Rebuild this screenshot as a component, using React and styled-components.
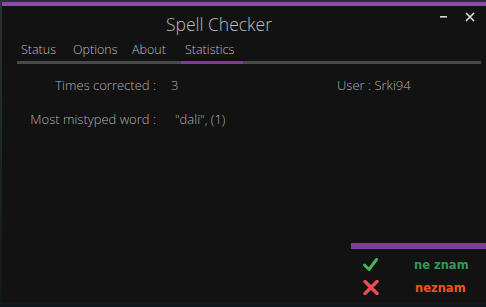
import styled, { createGlobalStyle } from "styled-components";

const GlobalStyle = createGlobalStyle`
  html, body {
    margin: 0;
    padding: 0;
    background: #0b1013;
  }
  * {
    box-sizing: border-box;
  }
`;

const Desktop = styled.div`
  position: relative;
  width: 486px;
  height: 307px;
  padding: 2px 0 4px 2px;
  background: linear-gradient(180deg, #2a3034 0%, #1d2a2e 40%, #10181b 100%);
  display: flex;
  overflow: hidden;
`;

const Window = styled.div`
  flex: 1;
  display: flex;
  flex-direction: column;
  background: #121212;
  border-top: 4px solid #8a4aa8;
  font-family: "Open Sans", "Noto Sans", sans-serif;
  color: #b0b0b0;
`;

const TitleBar = styled.div`
  position: relative;
  height: 33px;
  padding: 3px 50px 0 0;
  display: flex;
  align-items: center;
  justify-content: center;
`;

const Title = styled.div`
  font-size: 17.5px;
  font-weight: 300;
  color: #bcbcbc;
`;

const Controls = styled.div`
  position: absolute;
  right: 10px;
  top: 4px;
  display: flex;
  gap: 14px;
  align-items: center;
`;

const ControlButton = styled.div`
  width: 12px;
  height: 14px;
  display: flex;
  align-items: center;
  justify-content: center;
`;

const TabRow = styled.div`
  display: flex;
  padding-left: 19px;
  height: 20px;
  align-items: center;
`;

const Tab = styled.div`
  width: ${(p) => p.$w}px;
  font-size: 12.5px;
  font-weight: 300;
  color: #bdbdbd;
  white-space: nowrap;
`;

const TabLine = styled.div`
  display: flex;
  margin: 2px 5px 0 15px;
  height: 3px;
  background: #4a4a4a;
`;

const TabIndicator = styled.div`
  margin-left: ${(p) => p.$left}px;
  width: ${(p) => p.$width}px;
  background: #7d3c9e;
`;

const Content = styled.div`
  display: flex;
  padding-top: 11px;
  font-size: 13px;
  font-weight: 300;
`;

const StatGrid = styled.div`
  display: grid;
  grid-template-columns: 154px auto;
  row-gap: 13px;
  align-items: center;
  width: 335px;
`;

const Label = styled.div`
  text-align: right;
  line-height: 21px;
  white-space: nowrap;
`;

const Value = styled.div`
  padding-left: ${(p) => p.$pad}px;
  line-height: 21px;
  white-space: nowrap;
`;

const UserInfo = styled.div`
  line-height: 21px;
  white-space: nowrap;
`;

const Toast = styled.div`
  position: absolute;
  right: 0;
  bottom: 4px;
  width: 135px;
  height: 60px;
  background: #121212;
  border-top: 6px solid #7d3c9e;
  padding: 8px 0 0 12px;
  display: flex;
  flex-direction: column;
  gap: 8px;
`;

const ToastRow = styled.div`
  display: flex;
  align-items: center;
  height: 15px;
`;

const ToastText = styled.span`
  margin-left: 36px;
  font-family: "DejaVu Sans", "Liberation Sans", sans-serif;
  font-size: 11.5px;
  font-weight: bold;
  color: ${(p) => p.$color};
`;

const CheckIcon = () => (
  <svg width="15" height="14" viewBox="0 0 15 14">
    <polyline
      points="1.5,7 6,11.5 13.5,1.5"
      fill="none"
      stroke="#45b35a"
      strokeWidth="3"
      strokeLinecap="round"
      strokeLinejoin="round"
    />
  </svg>
);

const CrossIcon = () => (
  <svg width="16" height="15" viewBox="0 0 16 15">
    <path
      d="M2 1.5 L14 13.5 M14 1.5 L2 13.5"
      fill="none"
      stroke="#ec4f4f"
      strokeWidth="3.4"
      strokeLinecap="round"
    />
  </svg>
);

const App = () => {
  return (
    <>
      <GlobalStyle />
      <Desktop>
        <Window>
          <TitleBar>
            <Title>Spell Checker</Title>
            <Controls>
              <ControlButton>
                <svg width="8" height="2" viewBox="0 0 8 2">
                  <rect x="0" y="0" width="7" height="1.6" fill="#d8d8d8" />
                </svg>
              </ControlButton>
              <ControlButton>
                <svg width="10" height="10" viewBox="0 0 10 10">
                  <path d="M1 1 L9 9 M9 1 L1 9" stroke="#e0e0e0" strokeWidth="1.6" />
                </svg>
              </ControlButton>
            </Controls>
          </TitleBar>
          <TabRow>
            <Tab $w={52}>Status</Tab>
            <Tab $w={59}>Options</Tab>
            <Tab $w={53}>About</Tab>
            <Tab $w={60}>Statistics</Tab>
          </TabRow>
          <TabLine>
            <TabIndicator $left={164} $width={62} />
          </TabLine>
          <Content>
            <StatGrid>
              <Label>Times corrected :</Label>
              <Value $pad={15}>3</Value>
              <Label>Most mistyped word :</Label>
              <Value $pad={19}>"dali", (1)</Value>
            </StatGrid>
            <UserInfo>User : Srki94</UserInfo>
          </Content>
        </Window>
        <Toast>
          <ToastRow>
            <CheckIcon />
            <ToastText $color="#2f9a55">ne znam</ToastText>
          </ToastRow>
          <ToastRow>
            <CrossIcon />
            <ToastText $color="#f0551e">neznam</ToastText>
          </ToastRow>
        </Toast>
      </Desktop>
    </>
  );
};

export default App;
